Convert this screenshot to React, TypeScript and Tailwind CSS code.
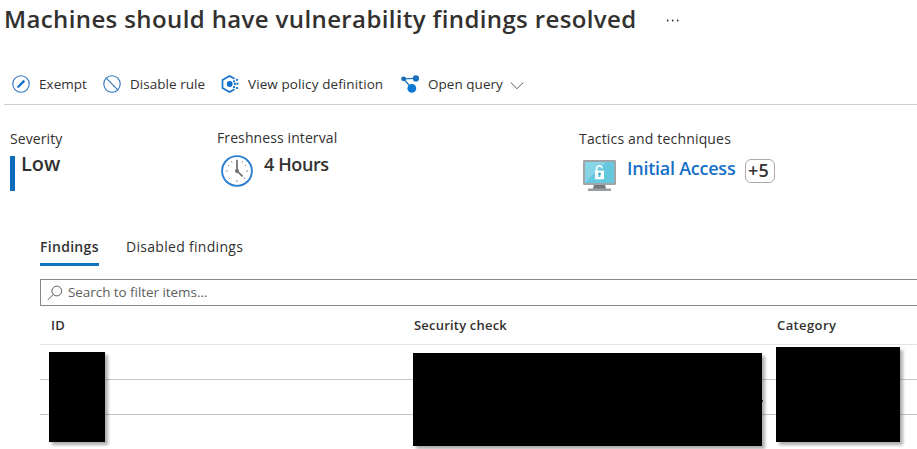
import type { ReactNode } from 'react';

function ExemptIcon() {
  return (
    <svg className="h-[18px] w-[18px]" viewBox="0 0 18 18" fill="none">
      <circle cx="9" cy="9" r="8.2" stroke="#2b73bd" strokeWidth="1.1" />
      <path d="M5 13l.5-2.1 6-6.2 1.7 1.7-6.1 6z" fill="#1670c8" />
    </svg>
  );
}

function DisableIcon() {
  return (
    <svg className="h-[18px] w-[18px]" viewBox="0 0 18 18" fill="none" stroke="#2b73bd" strokeWidth="1.1">
      <circle cx="9" cy="9" r="8.2" />
      <path d="M3.2 3.2l11.6 11.6" />
    </svg>
  );
}

function PolicyIcon() {
  return (
    <svg className="h-[18px] w-[18px]" viewBox="0 0 18 18" fill="none">
      <path d="M13.6 3.7L8.5.9 1.5 4.9v8.2l7 4 5.1-2.8" stroke="#1b74cc" strokeWidth="1.7" />
      <circle cx="8.7" cy="9" r="2.9" fill="#0b6fcf" />
      <g fill="#2378c8">
        <rect x="12" y="5.4" width="2" height="2" />
        <rect x="15" y="3.8" width="2" height="2" />
        <rect x="13" y="8" width="2" height="2" />
        <rect x="15.4" y="7.6" width="2" height="2" />
        <rect x="12" y="11" width="2" height="2" />
        <rect x="15" y="12" width="2" height="2" />
      </g>
    </svg>
  );
}

function QueryIcon() {
  return (
    <svg className="h-[18px] w-[18px]" viewBox="0 0 18 18" fill="#0f78d4">
      <path d="M2.5 3.8L15 3.4M2.5 3.8L10.5 13" stroke="#1f78c4" strokeWidth="1.3" />
      <circle cx="2.6" cy="3.8" r="2.4" fill="#1668b0" />
      <circle cx="14.9" cy="3.4" r="3.1" fill="#1670bd" />
      <circle cx="10.8" cy="13.4" r="4.4" />
    </svg>
  );
}

function ClockIcon() {
  return (
    <svg className="h-8 w-8" viewBox="0 0 32 32" fill="none">
      <circle cx="16" cy="16" r="14.9" stroke="#2a7fd0" strokeWidth="1.9" />
      <path
        d="M16 25.2v2M4.8 16h2M25.2 16h2M10.4 6.3l.8 1.4M21.6 6.3l-.8 1.4M6.9 10l1.2.8M25.1 10l-1.2.8M8 24l1.3-1.3M24 24l-1.3-1.3"
        stroke="#888"
        strokeWidth="1"
      />
      <path d="M16 4.8V16l5.6 5.4" stroke="#6e6e6e" strokeWidth="1.7" />
      <circle cx="16" cy="16" r="2" fill="#6e6e6e" />
    </svg>
  );
}

function MonitorIcon() {
  return (
    <svg className="h-[31px] w-[33px]" viewBox="0 0 33 31" fill="none">
      <path d="M11 24h11l1 5H10z" fill="#777a7d" />
      <path d="M5 28.5h23V31H5z" fill="#9b9c9e" />
      <rect x="0" y="0" width="33" height="25" rx="1.3" fill="#a2a4a6" />
      <rect x="2" y="2" width="29" height="21" fill="#66c8df" />
      <path d="M2 2h21L2 22.5z" fill="#86d5e7" />
      <path d="M13.5 11V8.7a2.8 2.8 0 0 1 5.6-.2" stroke="white" strokeWidth="1.5" />
      <rect x="12" y="10.5" width="9" height="8.7" rx=".6" fill="white" />
      <path d="M16.5 12.5a1.4 1.4 0 0 1 .8 2.6v2h-1.6v-2a1.4 1.4 0 0 1 .8-2.6z" fill="#43b2cd" />
    </svg>
  );
}

function Command({ icon, children, className }: { icon: ReactNode; children: ReactNode; className: string }) {
  return (
    <button className={`flex shrink-0 items-center gap-[9px] whitespace-nowrap text-left ${className}`}>
      {icon}
      <span className="mt-px">{children}</span>
    </button>
  );
}

const block = 'absolute bg-black shadow-[3px_3px_3px_rgba(0,0,0,0.32)]';

export default function App() {
  return (
    <main className="h-[449px] w-[917px] overflow-hidden bg-white font-['Open_Sans','Noto_Sans',sans-serif] text-[#323130]">
      <header className="flex h-[37px] items-start whitespace-nowrap pl-1">
        <h1 className="w-[662px] text-[24px] font-semibold leading-[37px] tracking-[0.38px]">
          Machines should have vulnerability findings resolved
        </h1>
        <svg className="mt-[19px] h-[3px] w-[14px]" viewBox="0 0 14 3" fill="#333">
          <circle cx="1.7" cy="1.5" r=".9" />
          <circle cx="6.7" cy="1.5" r=".9" />
          <circle cx="11.7" cy="1.5" r=".9" />
        </svg>
      </header>

      <nav className="ml-1 mt-[27px] flex h-[41px] items-center border-b border-[#d2d0ce] pl-2 text-[13.5px] tracking-[0.03px]">
        <Command className="w-[91px]" icon={<ExemptIcon />}>Exempt</Command>
        <Command className="w-[118px]" icon={<DisableIcon />}>Disable rule</Command>
        <Command className="w-[180px] tracking-[0.1px]" icon={<PolicyIcon />}>View policy definition</Command>
        <Command className="w-[109px]" icon={<QueryIcon />}>Open query</Command>
        <svg className="mt-px h-3 w-[14px]" viewBox="0 0 14 12" fill="none" stroke="#555">
          <path d="M.8 3.5L7 9.7l6.2-6.2" />
        </svg>
      </nav>

      <section className="flex h-[123px] whitespace-nowrap pl-[10px] pt-[24px]">
        <div className="w-[207px]">
          <div className="text-[14px] leading-5 tracking-[0.1px]">Severity</div>
          <div className="mt-[7px] flex h-[35px] border-l-[5px] border-[#0f6cbd] pl-[6px] text-[20px] font-semibold leading-[15px] tracking-[-0.1px]">
            Low
          </div>
        </div>
        <div className="w-[362px] -mt-px">
          <div className="text-[14px] leading-5 tracking-[0.1px]">Freshness interval</div>
          <div className="mt-[7px] flex pl-1">
            <ClockIcon />
            <strong className="ml-[11px] text-[18px] font-semibold leading-[18px] tracking-[-0.4px]">4 Hours</strong>
          </div>
        </div>
        <div>
          <div className="text-[14px] leading-5 tracking-[0.17px]">Tactics and techniques</div>
          <div className="mt-[10px] flex pl-1">
            <div className="pt-[1px]"><MonitorIcon /></div>
            <a className="ml-[11px] w-[118px] text-[18px] font-semibold leading-[18px] tracking-[-0.25px] text-[#176fc8]">Initial Access</a>
            <span className="flex h-6 w-[30px] justify-center rounded-md border border-[#aaa] pr-[3px] text-[18px] font-semibold leading-[20px] tracking-[0.3px]">+5</span>
          </div>
        </div>
      </section>

      <section className="ml-10 mt-[9px]">
        <div className="flex h-[29px] gap-[27px] whitespace-nowrap text-[14px] leading-5">
          <button className="flex h-[29px] w-[59px] items-start border-b-[3px] border-[#1073bf] font-semibold tracking-[0.3px]">Findings</button>
          <button className="flex items-start tracking-[0.3px]">Disabled findings</button>
        </div>
        <label className="mt-[13px] flex h-[27px] items-center border border-r-0 border-[#8a8886] pl-[6px] text-[13.5px] text-[#605e5c]">
          <svg className="h-4 w-4" viewBox="0 0 16 16" fill="none" stroke="#605e5c">
            <circle cx="9.8" cy="6" r="4.9" />
            <path d="M6.3 9.5L.7 15" />
          </svg>
          <span className="ml-[5px] tracking-[-0.06px]">Search to filter items...</span>
        </label>
        <div className="relative">
          <div className="flex h-[39px] border-b border-[#e5e4e3] pl-[11px] text-[13px] font-semibold leading-[38px] tracking-[0.2px]">
            <span className="w-[363px]">ID</span>
            <span className="w-[363px]">Security check</span>
            <span className="tracking-[0.4px]">Category</span>
          </div>
          <div className="h-[35px] border-b border-[#c8c6c4]" />
          <div className="h-[35px] border-b border-[#c8c6c4]" />
          <div className="h-[34px]" />
          <div className={`${block} left-[9px] top-[46px] h-[90px] w-14`} />
          <div className={`${block} left-[373px] top-[47px] h-[93px] w-[349px]`} />
          <div className={`${block} left-[736px] top-[41px] h-[95px] w-[124px]`} />
          <div className="absolute left-[722px] top-[94px] h-[2px] w-px bg-[#333]" />
        </div>
      </section>
    </main>
  );
}
